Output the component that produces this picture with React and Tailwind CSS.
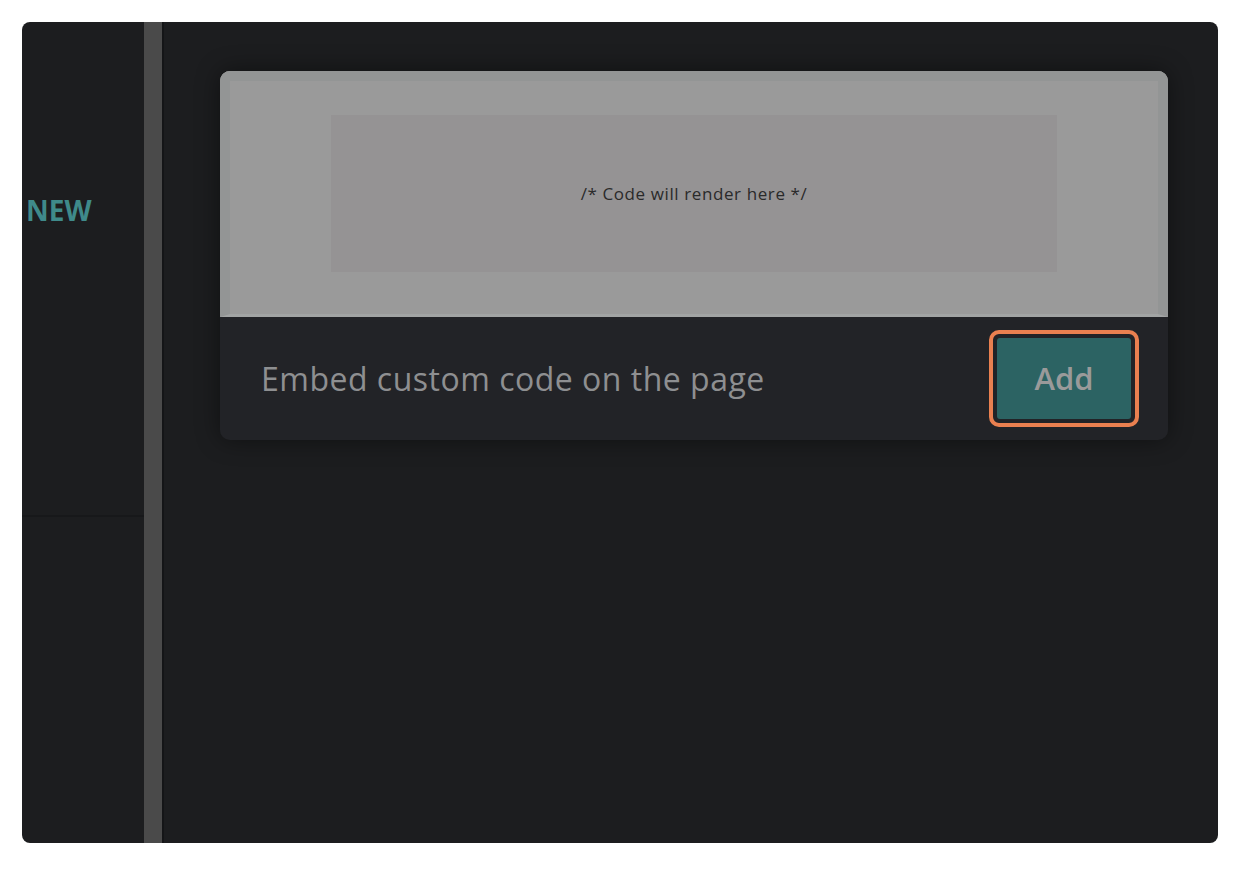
export default function App() {
  return (
    <div className="w-[1252px] h-[876px] bg-white p-[22px] pb-[33px] pr-[34px]" style={{ fontFamily: '"Open Sans", "Liberation Sans", sans-serif' }}>
      <div className="flex h-full w-full overflow-hidden rounded-[8px] bg-[#1c1d1f]">
        {/* left column */}
        <div className="flex w-[122px] flex-col">
          <div className="h-[495px] border-b-2 border-[#17181a] pt-[172px] pl-[4px]">
            <span className="text-[28px] font-bold leading-[32px] text-[#3f8a8a]">NEW</span>
          </div>
          <div className="flex-1" />
        </div>
        {/* divider bar */}
        <div className="w-[18px] bg-[#4a4a4a]" />
        <div className="w-[2px] bg-[#141517]" />
        {/* content */}
        <div className="flex-1 pl-[56px] pt-[49px] pr-[50px]">
          <div className="overflow-hidden rounded-[10px] shadow-[0_0_24px_rgba(0,0,0,0.45)]">
            <div className="flex h-[246px] items-start justify-center border-[10px] border-[#939595] border-b-[3px] border-b-[#a2a4a4] bg-[#9a9a9a] pt-[34px]">
              <div className="flex h-[157px] w-[726px] items-center justify-center bg-[#959394]">
                <span className="text-[17px] tracking-[0.6px] text-[#2a2a2a]">/* Code will render here */</span>
              </div>
            </div>
            <div className="flex h-[123px] items-center justify-between bg-[#222327] pl-[41px] pr-[29px]">
              <span className="text-[32px] leading-[40px] tracking-[0.5px] text-[#8e8f91]">Embed custom code on the page</span>
              <div className="rounded-[10px] border-[4px] border-[#ea8050] p-[4px]">
                <div className="flex h-[81px] w-[134px] items-center justify-center rounded-[3px] bg-[#2c6363]">
                  <span className="text-[31px] font-semibold text-[#9a9a9a]">Add</span>
                </div>
              </div>
            </div>
          </div>
        </div>
      </div>
    </div>
  );
}
